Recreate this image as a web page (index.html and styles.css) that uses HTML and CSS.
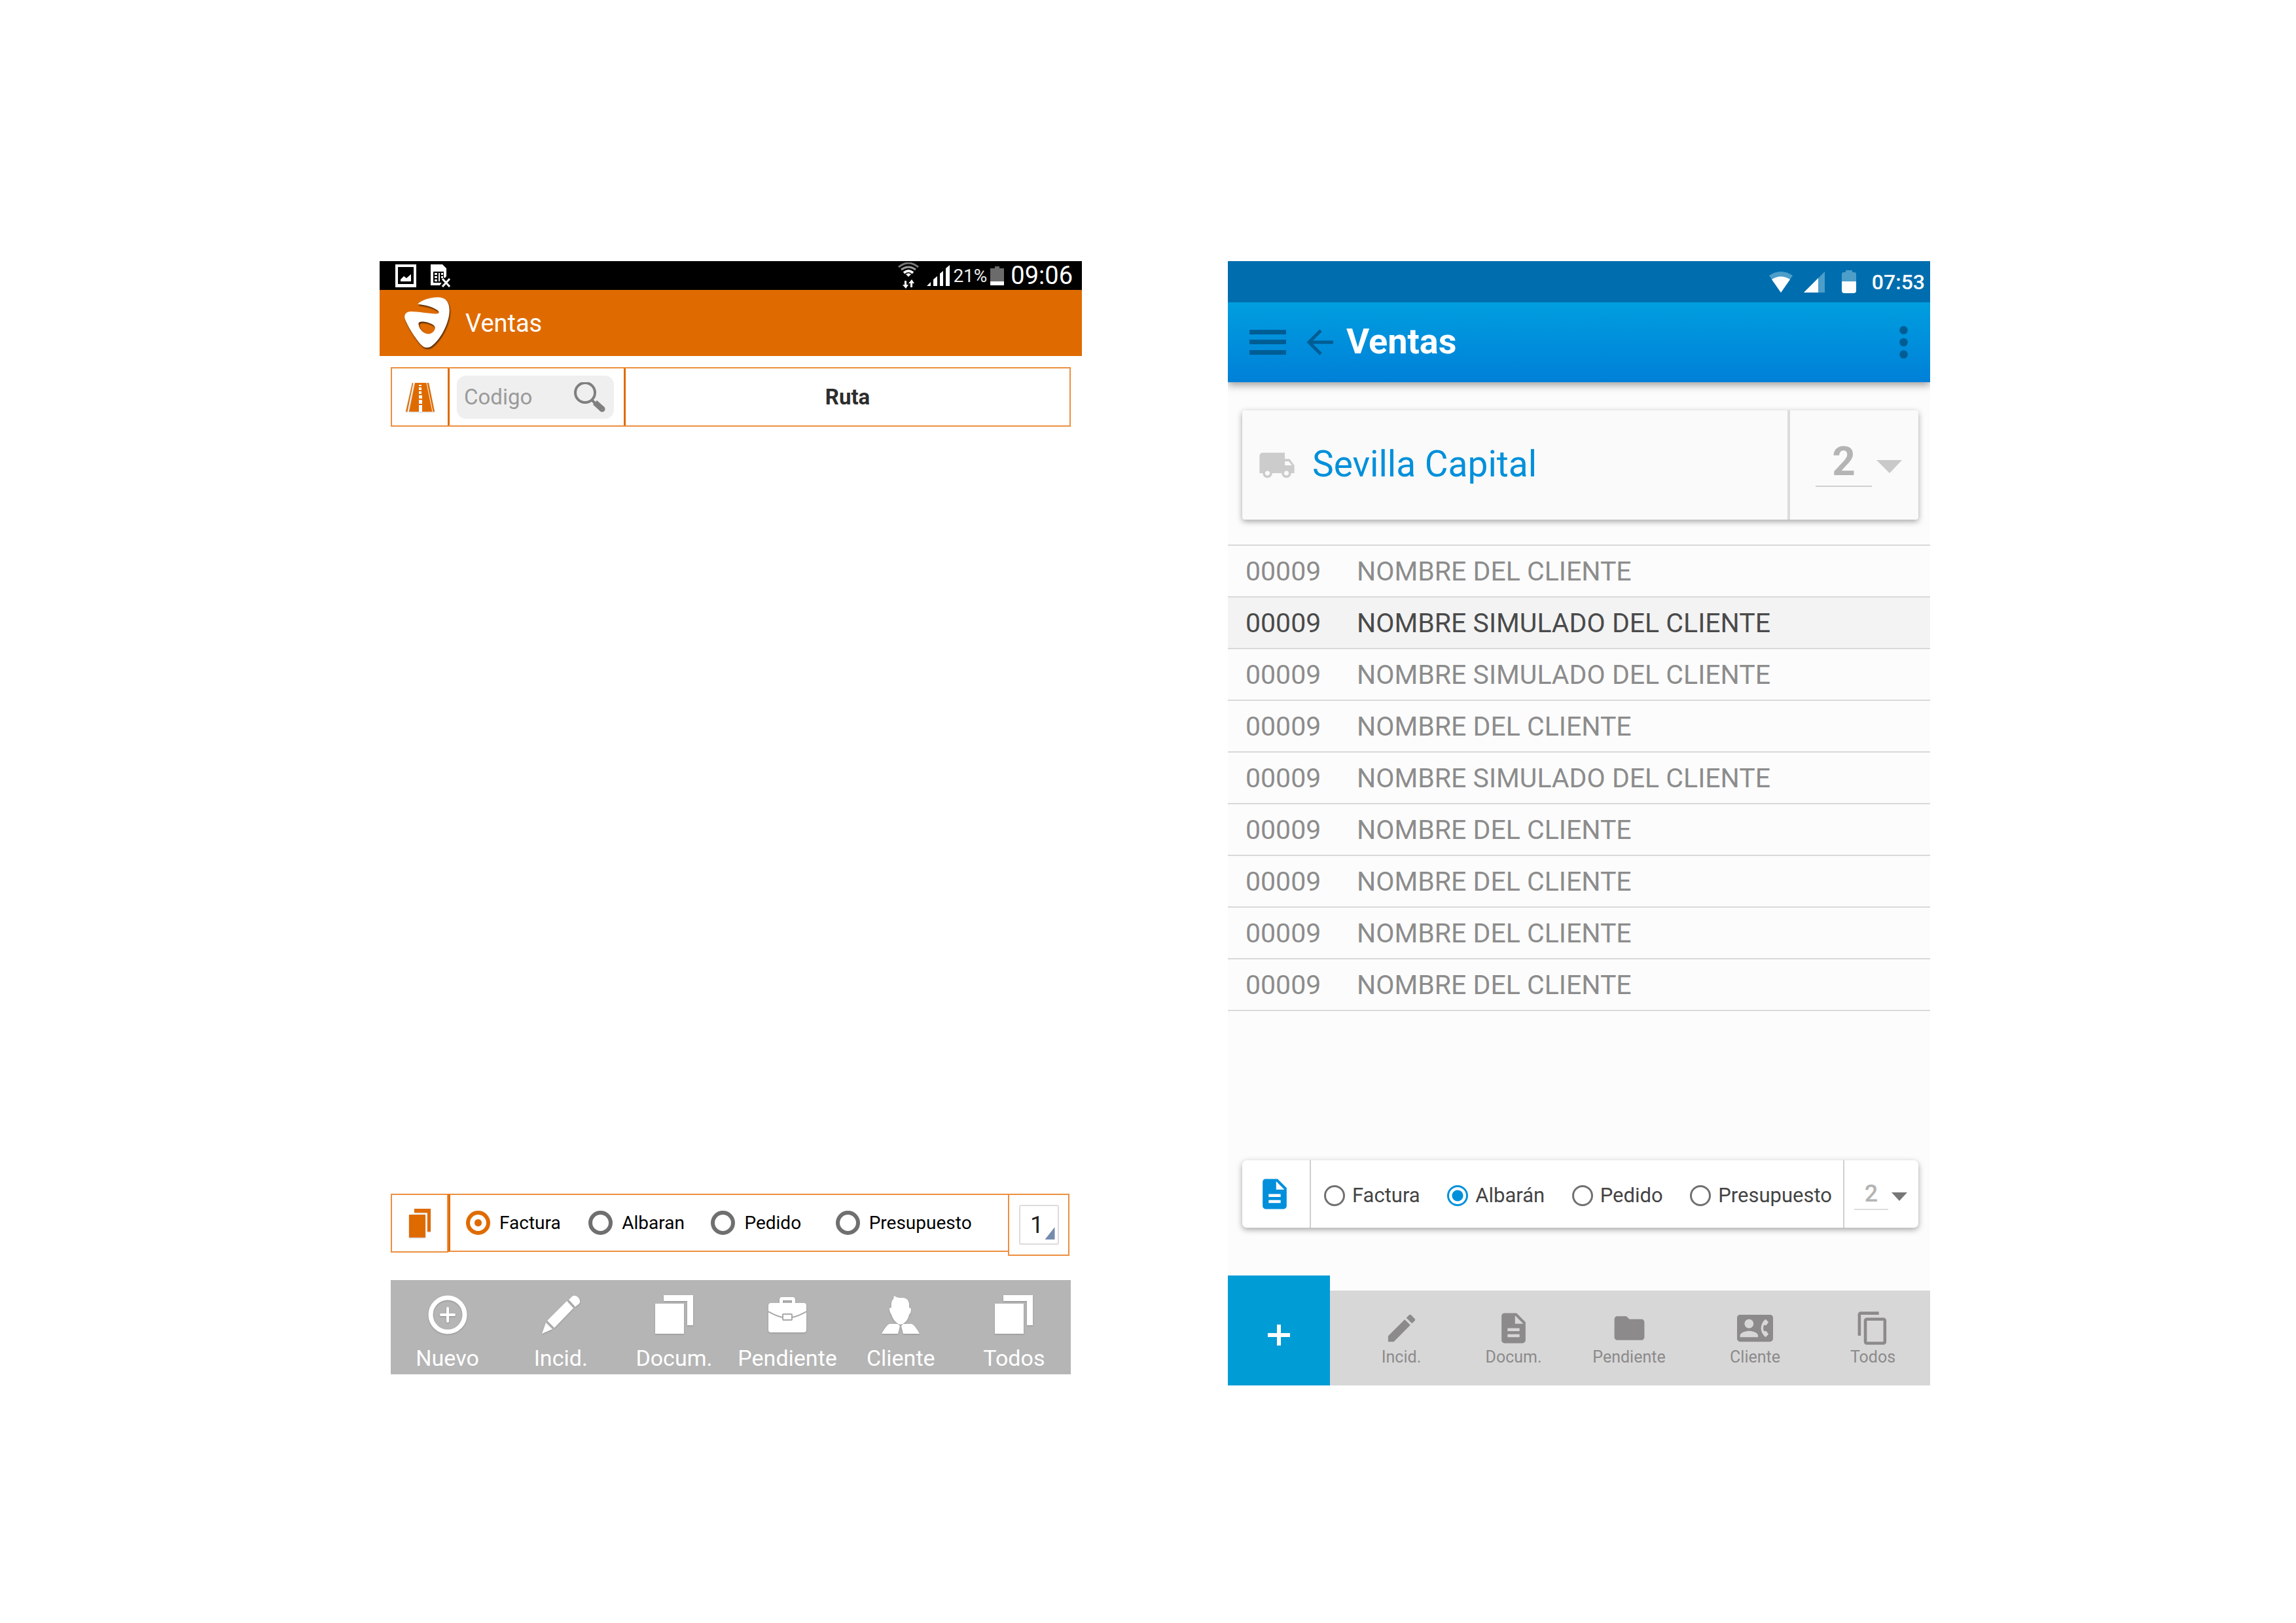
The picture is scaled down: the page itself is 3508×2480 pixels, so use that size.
FILE: index.html
```html
<!DOCTYPE html>
<html lang="es">
<head>
<meta charset="utf-8">
<meta name="viewport" content="width=device-width, initial-scale=1">
<title>Ventas</title>
<link rel="stylesheet" href="styles.css">
</head>
<body>
<main class="board">

  <section class="phone old" aria-label="Ventas, versión anterior">
    <div class="old-status">
      <svg width="32" height="35" viewBox="0 0 32 35" fill="#fff"><path fill-rule="evenodd" d="M0 0h32v35H0zM4 4v26h24V4z"/><path d="M8 26v-3l5-5 4 3 7-6v11z"/></svg>
      <svg class="sim" width="32" height="35" viewBox="0 0 32 35"><path fill="#fff" d="M0 0h18l6 6v12l-6 8-4 6H0z"/><path fill="#000" d="M4 11h16v17H4z"/><path fill="#fff" d="M6 13h4v3H6zM6 18h4v3H6zM6 23h4v3H6zM12 13h2v13h-2zM16 13h3v3h-3zM16 18h3v3h-3z"/><path stroke="#000" stroke-width="7" d="M18 22l11 12M29 22L18 34"/><path stroke="#fff" stroke-width="3" d="M18 22l11 12M29 22L18 34"/></svg>
      <span class="spacer"></span>
      <svg class="old-wifi" width="32" height="40" viewBox="0 0 32 40" fill="none"><path stroke="#777" stroke-width="3" d="M1 7Q16-5 31 7"/><path stroke="#999" stroke-width="3" d="M5 11Q16 3 27 11"/><path stroke="#fff" stroke-width="4" d="M9 16Q16 10 23 16"/><path fill="#fff" d="M12 18q4-3 8 0l-4 4zM10 28h3v6h3l-4 6-5-6h3zM19 38v-6h-3l5-6 4 6h-3v6z"/></svg>
      <svg class="old-signal" width="35" height="32" viewBox="0 0 35 32" fill="#fff"><path d="M0 32l6-6v6zM10 32V22l6-5v15zM20 32V13l5-4v23zM29 32V5l6-5v32z"/></svg>
      <span class="old-percent">21%</span>
      <svg class="old-battery" width="21" height="29" viewBox="0 0 21 29"><path fill="#6b6b6b" d="M0 3h7V0h7v3h7v20H0z"/><path fill="#fff" d="M0 23h21v6H0z"/></svg>
      <time class="old-time">09:06</time>
    </div>

    <header class="old-bar">
      <svg class="logo" width="69" height="79" viewBox="0 0 192 236" preserveAspectRatio="none"><path fill="#fff" fill-rule="evenodd" d="M56 31C75 13 112 0 145 1C180 2 192 30 191 65C190 122 150 198 115 224C100 234 85 232 75 222C45 190 13 130 2 100C-4 80 8 66 27 66C62 66 108 77 135 76C149 75 149 68 140 60C120 43 85 36 56 31zM60 125C58 113 70 111 85 113C110 117 130 128 130 140C130 158 112 170 98 168C78 165 62 145 60 125z"/></svg>
      <h1 class="old-title">Ventas</h1>
    </header>

    <div class="old-search">
      <div class="old-cell">
        <svg class="lift" width="44" height="44" viewBox="0 0 44 44"><path fill="#df6b00" d="M10 0h2L3 44H0zM14 0h20l8 44H5zM33 0h2l9 44h-3z"/><path stroke="#fff" stroke-width="1" d="M12 0L3 44M32 0l9 44"/><path fill="#fff" d="M20 3h4v2h-4zM20 7h4v4h-4zM20 13h4v4h-4zM20 19h5v5h-5zM20 26h5v6h-5zM20 34h5v10h-5z"/></svg>
      </div>
      <div class="old-cell divided field-cell">
        <label class="field">
          <input type="text" placeholder="Codigo" aria-label="Codigo">
          <svg width="50" height="46" viewBox="0 0 50 46" fill="none" stroke="#7f7f7f"><circle cx="18" cy="16" r="15" stroke-width="4"/><path stroke-width="4" d="M28 27l6 6"/><path stroke-width="9" stroke-linejoin="round" d="M33 31l11 10"/><circle cx="44" cy="41" r="2" stroke-width="5"/></svg>
        </label>
      </div>
      <h2 class="old-cell divided route">Ruta</h2>
    </div>

    <div class="old-space"></div>

    <div class="old-docs">
      <div class="old-cell docs-icon">
        <svg class="lift" width="33" height="44" viewBox="0 0 33 44" fill="#df6b00"><path d="M0 9h25v35H0zM8 0h25v35h-5V6H8z"/></svg>
      </div>
      <div class="old-cell docs-types" role="radiogroup" aria-label="Tipo de documento">
        <label><input type="radio" name="old-type" checked>Factura</label>
        <label><input type="radio" name="old-type">Albaran</label>
        <label><input type="radio" name="old-type">Pedido</label>
        <label><input type="radio" name="old-type">Presupuesto</label>
      </div>
      <div class="old-cell docs-count">
        <span class="old-select"><select aria-label="Serie"><option>1</option></select></span>
      </div>
    </div>

    <nav class="old-nav">
      <button type="button"><svg class="lift" width="60" height="60" viewBox="0 0 60 60" fill="none" stroke="#fff"><circle cx="30" cy="30" r="26" stroke-width="7"/><path stroke-width="4" stroke-linecap="round" d="M30 20v20M20 30h20"/></svg>Nuevo</button>
      <button type="button"><svg class="lift" width="60" height="60" viewBox="0 0 60 60" fill="#fff"><path d="M1 59L7 42l10 10zM9 39L39 9l10 11L20 50zM42 7l5-5q4-3 9 1 5 5 2 10l-6 5z"/></svg>Incid.</button>
      <button type="button"><svg class="lift" width="58" height="60" viewBox="0 0 58 60" fill="#fff"><path d="M0 13h44v46H0zM13 0h45v46h-9V9H13z"/></svg>Docum.</button>
      <button type="button"><svg class="lift" width="58" height="60" viewBox="0 0 58 60"><path fill="#fff" fill-rule="evenodd" d="M17 12V7q0-4 4-4h16q4 0 4 4v5h13q4 0 4 4v37q0 4-4 4H4q-4 0-4-4V16q0-4 4-4zM22 12h14V8H22z"/><path fill="none" stroke="#a9a9a9" stroke-width="2" d="M0 25q12 7 22 9M58 25q-12 7-22 9"/><rect x="22" y="29" width="14" height="9" rx="1" fill="#fff" stroke="#a9a9a9" stroke-width="2"/></svg>Pendiente</button>
      <button type="button"><svg class="lift" width="58" height="60" viewBox="0 0 58 60" fill="#fff"><path d="M19 1q6 4 14 3 8 1 9 9v6q3 0 3 4t-3 7q-2 9-8 13-5 4-10 0-6-4-9-13-2-3-3-7t3-4q-1-10 3-13zM12 44h13l3 3-3 12H0q7-13 12-15zM46 44H33l-3 3 3 12h25q-7-13-12-15z"/></svg>Cliente</button>
      <button type="button"><svg class="lift" width="58" height="60" viewBox="0 0 58 60" fill="#fff"><path d="M0 13h44v46H0zM13 0h45v46h-9V9H13z"/></svg>Todos</button>
    </nav>
  </section>

  <section class="phone new" aria-label="Ventas, versión nueva">
    <div class="new-status">
      <svg class="new-wifi" width="36" height="32" viewBox="0 0 36 32"><path fill="#4d9ec9" d="M0 6Q18-6 36 6L18 32z"/><path fill="#fff" d="M4 12Q18 3 32 12L18 32z"/></svg>
      <svg class="new-signal" width="32" height="32" viewBox="0 0 32 32"><path fill="#4d9ec9" d="M0 32L32 0v32z"/><path fill="#fff" d="M0 32L22 10v22z"/></svg>
      <svg class="new-battery" width="22" height="35" viewBox="0 0 22 35"><path fill="#4d9ec9" d="M0 17V6q0-3 3-3h3V0h10v3h3q3 0 3 3v11z"/><path fill="#fff" d="M0 17h22v14q0 4-4 4H4q-4 0-4-4z"/></svg>
      <time>07:53</time>
    </div>

    <header class="new-bar">
      <button type="button" class="menu" aria-label="Menú"><svg width="56" height="38" viewBox="0 0 56 38" fill="#005d94"><path d="M0 0h56v7H0zM0 15h56v7H0zM0 31h56v7H0z"/></svg></button>
      <button type="button" class="back" aria-label="Volver"><svg width="41" height="40" viewBox="0 0 41 40" fill="none" stroke="#005d94" stroke-width="5"><path d="M41 20H4M22 2L4 20l18 18"/></svg></button>
      <h1 class="new-title">Ventas</h1>
      <button type="button" class="more" aria-label="Más opciones"><svg width="13" height="50" viewBox="0 0 13 50" fill="#005d94"><circle cx="6.500" cy="6.500" r="6.300"/><circle cx="6.500" cy="25" r="6.300"/><circle cx="6.500" cy="43.500" r="6.300"/></svg></button>
    </header>

    <div class="card zone">
      <div class="zone-name">
        <svg width="58" height="58" viewBox="0 0 24 24" fill="#ccc"><path d="M20 8h-3V4H3c-1.100 0-2 .9-2 2v11h2c0 1.660 1.340 3 3 3s3-1.340 3-3h6c0 1.660 1.340 3 3 3s3-1.340 3-3h2v-5l-3-4zM6 18.500c-.83 0-1.500-.67-1.500-1.500s.67-1.500 1.500-1.500 1.500.67 1.500 1.500-.67 1.500-1.500 1.500zm13.500-9l1.960 2.500H17V9.500h2.500zm-1.500 9c-.83 0-1.500-.67-1.500-1.500s.67-1.500 1.500-1.500 1.500.67 1.500 1.500-.67 1.500-1.500 1.500z"/></svg>
        <h2>Sevilla Capital</h2>
      </div>
      <div class="zone-count">
        <select aria-label="Ruta"><option>2</option></select>
        <svg class="caret" width="39" height="20" viewBox="0 0 39 20" fill="#c9c9c9"><path d="M0 0h39L20 20z"/></svg>
      </div>
    </div>

    <div class="clients-area">
      <table class="clients">
        <tbody>
          <tr><td class="code">00009</td><td>NOMBRE DEL CLIENTE</td></tr>
          <tr class="selected"><td class="code">00009</td><td>NOMBRE SIMULADO DEL CLIENTE</td></tr>
          <tr><td class="code">00009</td><td>NOMBRE SIMULADO DEL CLIENTE</td></tr>
          <tr><td class="code">00009</td><td>NOMBRE DEL CLIENTE</td></tr>
          <tr><td class="code">00009</td><td>NOMBRE SIMULADO DEL CLIENTE</td></tr>
          <tr><td class="code">00009</td><td>NOMBRE DEL CLIENTE</td></tr>
          <tr><td class="code">00009</td><td>NOMBRE DEL CLIENTE</td></tr>
          <tr><td class="code">00009</td><td>NOMBRE DEL CLIENTE</td></tr>
          <tr><td class="code">00009</td><td>NOMBRE DEL CLIENTE</td></tr>
        </tbody>
      </table>
    </div>

    <div class="card docs">
      <div class="docs-type-icon">
        <svg width="55" height="55" viewBox="0 0 24 24" fill="#008fdb"><path d="M14 2H6c-1.100 0-1.990.9-1.990 2L4 20c0 1.100.89 2 1.990 2H18c1.100 0 2-.9 2-2V8l-6-6zm2 16H8v-2h8v2zm0-4H8v-2h8v2zm-3-5V3.500L18.500 9H13z"/></svg>
      </div>
      <div class="docs-options" role="radiogroup" aria-label="Tipo de documento">
        <label><input type="radio" name="new-type">Factura</label>
        <label><input type="radio" name="new-type" checked>Albarán</label>
        <label><input type="radio" name="new-type">Pedido</label>
        <label><input type="radio" name="new-type">Presupuesto</label>
      </div>
      <div class="docs-serie">
        <select aria-label="Serie"><option>2</option></select>
        <svg class="caret" width="24" height="13" viewBox="0 0 24 13" fill="#777"><path d="M0 0h24L12 13z"/></svg>
      </div>
    </div>

    <nav class="new-nav">
      <button type="button" class="add" aria-label="Nuevo"><svg width="34" height="34" viewBox="0 0 34 34" fill="none" stroke="#fff" stroke-width="6"><path d="M17 1v32M0 17h34"/></svg></button>
      <div class="new-tabs">
        <button type="button"><svg width="55" height="55" viewBox="0 0 24 24"><path d="M3 17.250V21h3.750L17.810 9.940l-3.750-3.750L3 17.250zM20.710 7.040c.39-.39.39-1.020 0-1.410l-2.340-2.340c-.39-.39-1.020-.39-1.410 0l-1.830 1.830 3.750 3.750 1.830-1.830z"/></svg>Incid.</button>
        <button type="button"><svg width="55" height="55" viewBox="0 0 24 24"><path d="M14 2H6c-1.100 0-1.990.9-1.990 2L4 20c0 1.100.89 2 1.990 2H18c1.100 0 2-.9 2-2V8l-6-6zm2 16H8v-2h8v2zm0-4H8v-2h8v2zm-3-5V3.500L18.500 9H13z"/></svg>Docum.</button>
        <button type="button"><svg width="55" height="55" viewBox="0 0 24 24"><path d="M10 4H4c-1.100 0-1.990.9-1.990 2L2 18c0 1.100.9 2 2 2h16c1.100 0 2-.9 2-2V8c0-1.100-.9-2-2-2h-8l-2-2z"/></svg>Pendiente</button>
        <button type="button"><svg width="55" height="55" viewBox="0 0 24 24"><path d="M22 3H2C.9 3 0 3.900 0 5v14c0 1.100.9 2 2 2h20c1.100 0 1.990-.9 1.990-2L24 5c0-1.100-.9-2-2-2zM8 6c1.660 0 3 1.340 3 3s-1.340 3-3 3-3-1.340-3-3 1.340-3 3-3zm6 12H2v-1c0-2 4-3.100 6-3.100s6 1.100 6 3.100v1zm3.850-4h1.640L21 16l-1.990 1.990c-1.310-.98-2.280-2.380-2.730-3.990-.18-.64-.28-1.310-.28-2s.1-1.360.28-2c.45-1.620 1.420-3.010 2.730-3.990L21 8l-1.510 2h-1.640c-.22.63-.35 1.300-.35 2s.13 1.370.35 2z"/></svg>Cliente</button>
        <button type="button"><svg width="55" height="55" viewBox="0 0 24 24"><path d="M16 1H4c-1.100 0-2 .9-2 2v14h2V3h12V1zm3 4H8c-1.100 0-2 .9-2 2v14c0 1.100.9 2 2 2h11c1.100 0 2-.9 2-2V7c0-1.100-.9-2-2-2zm0 16H8V7h11v14z"/></svg>Todos</button>
      </div>
    </nav>
  </section>

</main>
</body>
</html>
```
FILE: styles.css
```css
* {
  box-sizing: border-box;
}

body {
  margin: 0;
  background: #fff;
  font-family: Roboto, "Liberation Sans", sans-serif;
}

h1,
h2 {
  margin: 0;
}

button,
input,
select {
  margin: 0;
  padding: 0;
  border: 0;
  background: none;
  border-radius: 0;
  font: inherit;
  color: inherit;
  appearance: none;
}

svg {
  display: block;
  flex: none;
}

.board {
  display: grid;
  grid-template-columns: 580fr 1073fr 223fr 1073fr 559fr;
  min-height: 100vh;
  padding: 399px 0 363px;
}

.phone {
  display: flex;
  flex-direction: column;
  min-width: 0;
}

.old {
  grid-column: 2;
  padding-bottom: 17px;
}

.new {
  grid-column: 4;
  background: #fcfcfc;
}

/* Previous version, orange theme */

.old-status {
  display: flex;
  align-items: center;
  height: 44px;
  padding: 0 14px 0 24px;
  background: #000;
  color: #fff;
}

.sim {
  margin-left: 22px;
}

.spacer {
  flex: 1;
}

.old-signal {
  margin-left: 12px;
}

.old-percent {
  margin: 0 5px;
  font-size: 28px;
  color: #eee;
}

.old-time {
  margin-left: 10px;
  font-size: 38px;
}

.old-bar {
  display: flex;
  align-items: center;
  gap: 24px;
  height: 101px;
  padding-left: 38px;
  background: #df6b00;
  color: #fff;
}

.logo {
  filter: drop-shadow(1px 2px 1px rgba(0, 0, 0, 0.7));
}

.old-title {
  font-size: 38px;
  font-weight: 400;
}

.lift {
  filter: drop-shadow(0 1px 1px rgba(0, 0, 0, 0.2));
}

.old-search {
  display: grid;
  grid-template-columns: 85px 269px 1fr;
  height: 91px;
  margin: 17px 17px 0;
  border: 2px solid #ec8f40;
}

.old-cell {
  display: flex;
  align-items: center;
  justify-content: center;
}

.divided {
  border-left: 3px solid #df6b00;
}

.field-cell {
  justify-content: flex-start;
  padding-left: 11px;
}

.field {
  display: flex;
  align-items: center;
  width: 240px;
  height: 66px;
  padding: 0 12px 0 11px;
  border-radius: 14px;
  background: #efefef;
  font-size: 33px;
}

.field input {
  flex: 1;
  min-width: 0;
}

.field input::placeholder {
  color: #9a9a9a;
  opacity: 1;
}

.route {
  font-size: 33px;
  font-weight: 700;
  color: #2d2d2d;
}

.old-space {
  flex: 1;
}

.old-docs {
  display: flex;
  align-items: flex-start;
  margin: 0 19px 0 17px;
}

.docs-icon,
.docs-types,
.docs-count {
  border: 2px solid #ec8f40;
}

.docs-icon {
  width: 88px;
  height: 90px;
}

.docs-types {
  display: grid;
  grid-template-columns: 187fr 187fr 190fr 263fr;
  flex: 1;
  height: 89px;
  padding-left: 24px;
  border-left: 3px solid #df6b00;
  border-right: 0;
}

.docs-types label {
  display: flex;
  align-items: center;
  gap: 14px;
  font-size: 28px;
}

.docs-types input {
  width: 37px;
  height: 37px;
  border: 6px solid #6f6f6f;
  border-radius: 50%;
}

.docs-types input:checked {
  border-color: #df6b00;
  background: radial-gradient(circle, #df6b00 5px, #fff 6px);
}

.docs-count {
  width: 94px;
  height: 95px;
}

.old-select {
  display: flex;
  position: relative;
  width: 61px;
  height: 61px;
  border: 2px solid #dcdcdc;
  border-radius: 3px;
}

.old-select::after {
  content: "";
  position: absolute;
  right: 4px;
  bottom: 6px;
  width: 15px;
  height: 19px;
  background: #758bae;
  clip-path: polygon(100% 0, 100% 100%, 0 100%);
  pointer-events: none;
}

.old-select select {
  width: 100%;
  padding-right: 6px;
  font-size: 36px;
  text-align: center;
  color: #222;
}

.old-nav {
  display: grid;
  grid-template-columns: repeat(6, 1fr);
  height: 144px;
  margin: 37px 17px 0;
  background: #b5b5b5;
}

.old-nav button {
  display: flex;
  flex-direction: column;
  align-items: center;
  gap: 16px;
  padding-top: 23px;
  font-size: 34px;
  line-height: 40px;
  color: #fff;
}

/* New version, blue theme */

.new-status {
  display: flex;
  align-items: center;
  justify-content: flex-end;
  height: 63px;
  padding-right: 8px;
  background: #006eae;
  color: #fff;
  font-size: 32px;
  font-weight: 500;
}

.new-signal {
  margin: 0 26px 0 17px;
}

.new-battery {
  margin-right: 24px;
}

.new-bar {
  display: flex;
  align-items: center;
  height: 122px;
  padding: 0 34px 0 33px;
  background: linear-gradient(#009edf, #0080d8);
  box-shadow: 0 4px 12px rgba(0, 0, 0, 0.4);
  clip-path: inset(0 0 -24px 0);
  color: #fff;
}

.back {
  margin-left: 31px;
}

.new-title {
  flex: 1;
  margin-left: 20px;
  padding-bottom: 3px;
  font-size: 54px;
  font-weight: 700;
}

.card {
  display: flex;
  margin: 0 18px 0 22px;
  border-radius: 4px;
  box-shadow: 0 3px 10px rgba(0, 0, 0, 0.35);
}

.zone {
  height: 167px;
  margin-top: 43px;
  background: #fafafa;
}

.zone-name {
  display: flex;
  flex: 1;
  align-items: center;
  gap: 25px;
  padding-left: 24px;
}

.zone-name h2 {
  padding-bottom: 3px;
  font-size: 55px;
  font-weight: 400;
  color: #0090db;
}

.zone-count {
  display: flex;
  align-items: center;
  gap: 7px;
  width: 200px;
  padding: 0 0 9px 39px;
  border-left: 4px solid #dcdcdc;
}

.zone-count select {
  width: 86px;
  height: 76px;
  padding-bottom: 4px;
  border-bottom: 2px solid #d0d0d0;
  font-size: 62px;
  font-weight: 700;
  text-align: center;
  color: #b4b4b4;
}

.caret {
  margin-top: 14px;
}

.clients-area {
  flex: 1;
  padding-top: 38px;
}

.clients {
  width: 100%;
  border-spacing: 0;
  border-top: 2px solid #d9d9d9;
  font-size: 41px;
  color: #8c8c8c;
}

.clients td {
  height: 79px;
  padding: 0;
  border-bottom: 2px solid #d9d9d9;
}

.clients .code {
  width: 197px;
  padding-left: 27px;
}

.clients .selected {
  background: #f3f3f3;
  color: #4a4a4a;
}

.docs {
  height: 103px;
  border-radius: 7px;
  background: #fff;
}

.docs-type-icon {
  display: flex;
  align-items: center;
  justify-content: center;
  width: 103px;
  padding-right: 4px;
}

.docs-options {
  display: flex;
  flex: 1;
  align-items: center;
  justify-content: space-between;
  padding: 4px 17px 0 20px;
  border: solid #cfcfcf;
  border-width: 0 2px;
  font-size: 31px;
  color: #444;
}

.docs-options label {
  display: flex;
  align-items: center;
  gap: 11px;
}

.docs-options input {
  width: 32px;
  height: 32px;
  border: 3px solid #707070;
  border-radius: 50%;
}

.docs-options input:checked {
  border-color: #0090db;
  background: radial-gradient(circle, #0090db 8px, #fff 9px);
}

.docs-serie {
  display: flex;
  align-items: center;
  gap: 5px;
  width: 113px;
  padding-left: 15px;
}

.docs-serie select {
  width: 52px;
  height: 48px;
  border-bottom: 2px solid #dedede;
  font-size: 36px;
  font-weight: 500;
  text-align: center;
  color: #b4b4b4;
}

.docs-serie .caret {
  margin-top: 7px;
}

.new-nav {
  display: flex;
  align-items: flex-end;
  margin-top: 73px;
}

.add {
  display: flex;
  align-items: center;
  justify-content: center;
  width: 156px;
  height: 168px;
  padding-top: 14px;
  background: #009cd6;
}

.new-tabs {
  display: grid;
  grid-template-columns: 172fr 171fr 182fr 203fr 157fr;
  flex: 1;
  height: 145px;
  padding: 0 9px 0 23px;
  background: #d7d7d7;
}

.new-tabs button {
  display: flex;
  flex-direction: column;
  align-items: center;
  gap: 2px;
  padding-top: 30px;
  font-size: 25px;
  line-height: 30px;
  color: #8c8a8b;
  fill: #8c8a8b;
}
```
